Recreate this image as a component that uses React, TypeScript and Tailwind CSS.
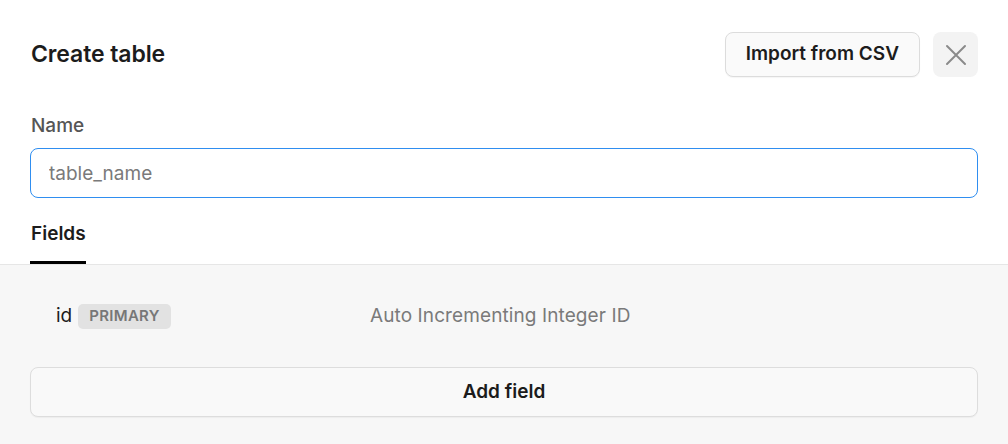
import React from "react";

export default function App() {
  return (
    <div className="w-[1008px] h-[444px] bg-white flex flex-col overflow-hidden font-['Inter',sans-serif] text-[#1c1c1c]">
      {/* ── Header / name ─────────────────────────────── */}
      <div className="px-[30px] pt-[32px] flex flex-col">
        <div className="flex items-center justify-between h-[45px]">
          <h1 className="text-[23px] font-semibold tracking-[-0.1px] pl-[1px]">Create table</h1>
          <div className="flex items-center gap-[13px]">
            <button className="h-[45px] px-[20px] rounded-[8px] border border-[#dcdcdc] bg-[#fafafa] text-[19px] font-semibold shadow-[0_1px_1px_rgba(0,0,0,0.04)]">
              Import from CSV
            </button>
            <button className="w-[45px] h-[45px] rounded-[8px] bg-[#f3f3f3] flex items-center justify-center">
              <svg width="22" height="22" viewBox="0 0 22 22" fill="none" stroke="#8a8a8a" strokeWidth="2" strokeLinecap="round">
                <path d="M2 2L20 20M20 2L2 20" />
              </svg>
            </button>
          </div>
        </div>

        <label className="mt-[37px] text-[19px] font-medium text-[#555] leading-[24px] pl-[1px]">Name</label>
        <input
          placeholder="table_name"
          className="mt-[10px] h-[50px] w-full rounded-[8px] border border-[#2f8ef0] px-[18px] text-[19px] placeholder:text-[#7a7a7a] outline-none"
        />

        <div className="mt-[24px] flex">
          <div className="flex flex-col">
            <span className="text-[19px] font-semibold leading-[24px] pl-[1px]">Fields</span>
            <div className="mt-[15px] h-[3px] w-[56px] bg-black" />
          </div>
        </div>
      </div>

      {/* ── Fields panel ──────────────────────────────── */}
      <div className="flex-1 bg-[#f7f7f7] border-t border-[#e6e6e6] px-[30px] pt-[39px]">
        <div className="flex items-center h-[25px]">
          <div className="w-[340px] flex items-center gap-[6px] pl-[26px]">
            <span className="text-[19px]">id</span>
            <span className="h-[25px] px-[11px] rounded-[5px] bg-[#e2e2e2] text-[15px] font-semibold text-[#777] flex items-center tracking-[0.3px]">
              PRIMARY
            </span>
          </div>
          <span className="text-[19px] text-[#7a7a7a] tracking-[0.1px]">Auto Incrementing Integer ID</span>
        </div>

        <button className="mt-[38px] h-[50px] w-full rounded-[8px] border border-[#dddddd] bg-[#f9f9f9] text-[19px] font-semibold shadow-[0_1px_1px_rgba(0,0,0,0.04)]">
          Add field
        </button>
      </div>
    </div>
  );
}
